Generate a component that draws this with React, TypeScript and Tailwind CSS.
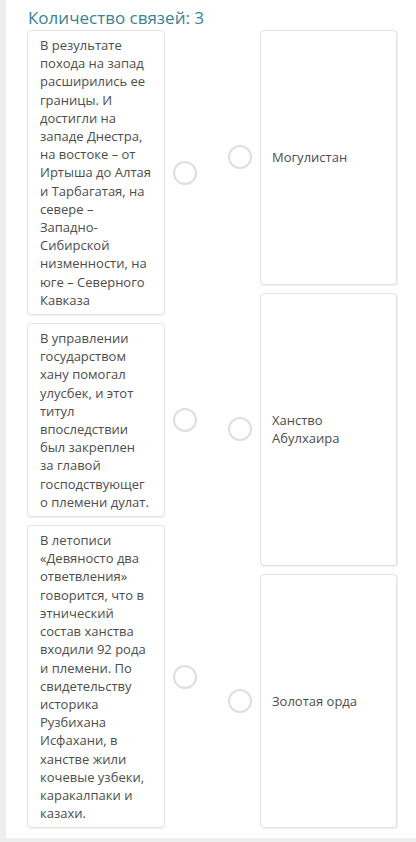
import { useState } from 'react'

const leftItems = [
  'В результате похода на запад расширились ее границы. И достигли на западе Днестра, на востоке – от Иртыша до Алтая и Тарбагатая, на севере – Западно-Сибирской низменности, на юге – Северного Кавказа',
  'В управлении государством хану помогал улусбек, и этот титул впоследствии был закреплен за главой господствующего племени дулат.',
  'В летописи «Девяносто два ответвления» говорится, что в этнический состав ханства входили 92 рода и племени. По свидетельству историка Рузбихана Исфахани, в ханстве жили кочевые узбеки, каракалпаки и казахи.',
]

const rightItems = ['Могулистан', 'Ханство Абулхаира', 'Золотая орда']

function Dot({ active, onClick }: { active: boolean; onClick: () => void }) {
  return (
    <button
      onClick={onClick}
      className={
        'w-6 h-6 shrink-0 rounded-full border-2 bg-white ' +
        (active ? 'border-[#3a8299]' : 'border-[#dedede]')
      }
    />
  )
}

export default function App() {
  const [left, setLeft] = useState<number | null>(null)
  const [right, setRight] = useState<number | null>(null)

  return (
    <main
      className="min-h-[842px] bg-[#eeeeee] pl-[6px] text-[#4d4d4d]"
      style={{ fontFamily: '"Open Sans", "Noto Sans", sans-serif' }}
    >
      <div className="bg-white pl-[21px] pr-[19px] pb-[10px]">
        <h2 className="pt-[6px] text-[17px] leading-[23px] text-[#3a8299] pl-[1px]">
          Количество связей: 3
        </h2>

        <div className="mt-[1px] flex justify-between">
          {/* statements, each with its own connector dot */}
          <div className="flex flex-col gap-2">
            {leftItems.map((text, i) => (
              <div key={i} className="flex items-center gap-2">
                <div className="w-[138px] rounded-[4px] border border-[#e3e3e3] bg-white pl-3 pr-[13px] py-[5px] text-[13px] leading-[18.2px] shadow-[0_1px_1px_rgba(0,0,0,0.06)] break-words">
                  {text}
                </div>
                <Dot active={left === i} onClick={() => setLeft(i)} />
              </div>
            ))}
          </div>

          {/* answers stretch to the height of the left column */}
          <div className="flex flex-col gap-2">
            {rightItems.map((text, i) => (
              <div key={i} className="flex grow items-center gap-2">
                <Dot active={right === i} onClick={() => setRight(i)} />
                <div className="flex self-stretch w-[137px] items-center rounded-[4px] border border-[#e3e3e3] bg-white pl-[11px] pr-3 py-[5px] text-[13px] leading-[18.2px] shadow-[1px_1px_1px_rgba(0,0,0,0.07)]">
                  {text}
                </div>
              </div>
            ))}
          </div>
        </div>
      </div>
    </main>
  )
}
